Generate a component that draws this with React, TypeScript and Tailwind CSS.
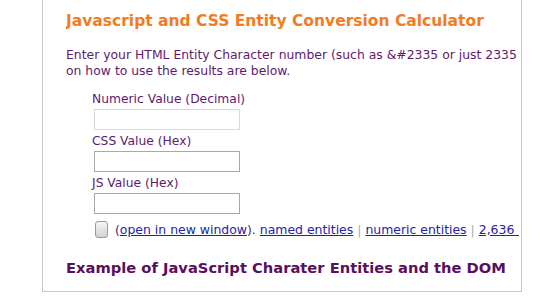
import React from "react";

export default function App() {
  const font = { fontFamily: '"DejaVu Sans", Verdana, sans-serif' };
  return (
    <div className="w-[560px] h-[300px] overflow-hidden bg-white" style={font}>
      <div className="ml-[42px] w-[480px] h-[292px] border-l border-r border-b border-[#c8c8c8] pl-[23px]">
        <div className="w-[453px] overflow-hidden">
          <h1 className="pt-[10px] text-[15.5px] leading-[22px] font-bold text-[#f37b22] whitespace-nowrap">
            Javascript and CSS Entity Conversion Calculator
          </h1>
          <p className="mt-[15px] text-[12.4px] leading-[16px] text-[#5e1b6e] whitespace-nowrap">
            Enter your HTML Entity Character number (such as &amp;#2335 or just 2335 to get conversions. Details
            <br />
            on how to use the results are below.
          </p>
          <div className="mt-[12px] ml-[26px] flex flex-col text-[12.3px] leading-[16px] text-[#5e1b6e]">
            <label>Numeric Value (Decimal)</label>
            <div className="mt-[2px] ml-[2px] w-[146px] h-[21px] border border-[#d8d8d8] bg-white" />
            <label className="mt-[3px]">CSS Value (Hex)</label>
            <div className="mt-[2px] ml-[2px] w-[146px] h-[21px] border border-[#a8a8a8] bg-white" />
            <label className="mt-[3px]">JS Value (Hex)</label>
            <div className="mt-[2px] ml-[2px] w-[146px] h-[21px] border border-[#a8a8a8] bg-white" />
            <div className="mt-[7px] ml-[3px] flex items-center whitespace-nowrap text-[12.45px]">
              <div className="shrink-0 w-[13px] h-[17px] rounded-[3px] border border-[#9a9a9a] bg-[linear-gradient(#f6f6f6,#d2d2d2)]" />
              <span className="ml-[7px]">
                (<a className="text-[#2323a8] underline">open in new window</a>).{" "}
                <a className="text-[#2323a8] underline">named entities</a>{" "}
                <span className="text-[#aaaaaa]">|</span>{" "}
                <a className="text-[#2323a8] underline">numeric entities</a>{" "}
                <span className="text-[#aaaaaa]">|</span>{" "}
                <a className="text-[#2323a8] underline">2,636 &nbsp;total entities</a>
              </span>
            </div>
          </div>
          <h2 className="mt-[20px] text-[14.7px] leading-[20px] font-bold text-[#5a0f5e] whitespace-nowrap">
            Example of JavaScript Charater Entities and the DOM
          </h2>
        </div>
      </div>
    </div>
  );
}
